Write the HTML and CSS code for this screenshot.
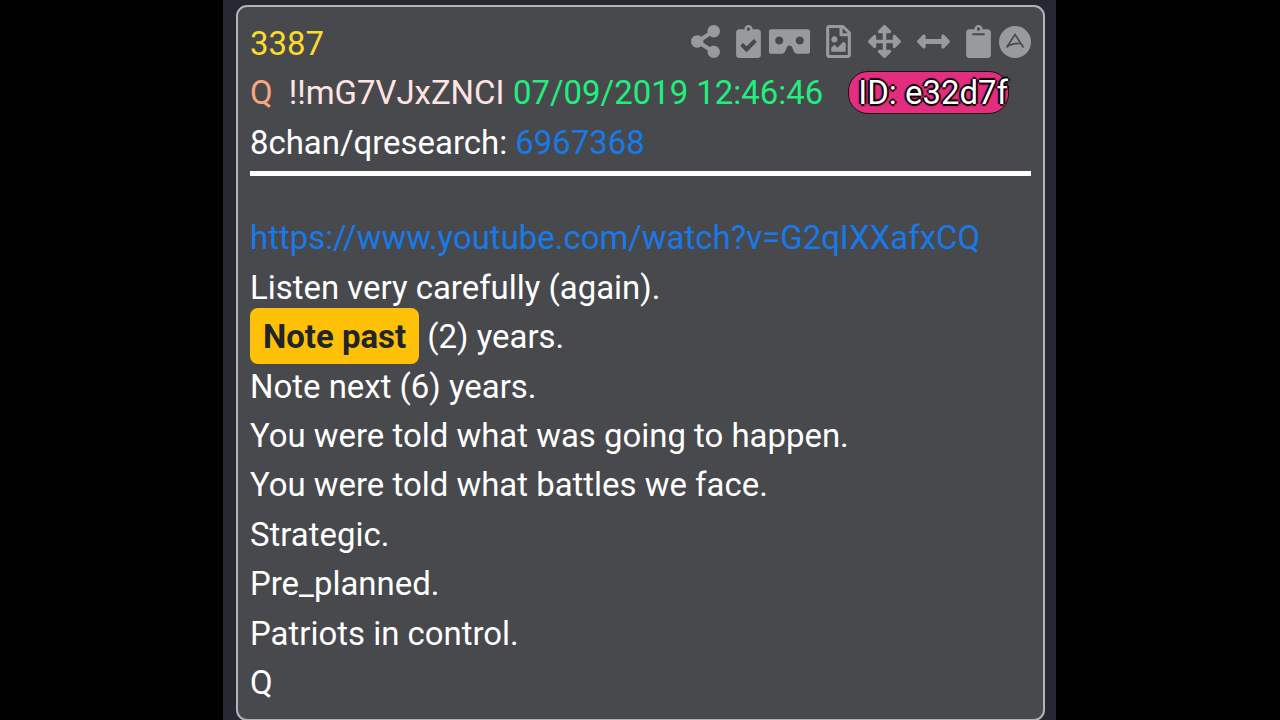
FILE: index.html
```html
<!DOCTYPE html>
<html lang="en">
<head>
    <meta charset="UTF-8">
    <meta name="viewport" content="width=device-width, initial-scale=1.0">
    <title>3387</title>
    <link rel="stylesheet" href="styles.css">
</head>
<body>
    <div class="page">
        <div class="post">
            <!-- Number and toolbar -->
            <div class="top">
                <span class="number">3387</span>
                <div class="tools">
                    <svg class="icon share" viewBox="0 0 448 512"><path d="M352 320c-22.608 0-43.387 7.819-59.79 20.895l-102.486-64.054a96.551 96.551 0 0 0 0-41.683l102.486-64.054C308.613 184.181 329.392 192 352 192c53.019 0 96-42.981 96-96S405.019 0 352 0s-96 42.981-96 96c0 7.158.79 14.13 2.276 20.841L155.79 180.895C139.387 167.819 118.608 160 96 160c-53.019 0-96 42.981-96 96s42.981 96 96 96c22.608 0 43.387-7.819 59.79-20.895l102.486 64.054A96.301 96.301 0 0 0 256 416c0 53.019 42.981 96 96 96s96-42.981 96-96-42.981-96-96-96z"/></svg>
                    <svg class="icon check" viewBox="0 0 384 512"><path d="M336 64h-80c0-35.3-28.7-64-64-64s-64 28.7-64 64H48C21.5 64 0 85.5 0 112v352c0 26.5 21.5 48 48 48h288c26.5 0 48-21.5 48-48V112c0-26.5-21.5-48-48-48zM192 40c13.3 0 24 10.7 24 24s-10.7 24-24 24-24-10.7-24-24 10.7-24 24-24zm121.2 231.8l-143 141.8c-4.7 4.7-12.3 4.6-17-.1l-82.6-83.3c-4.7-4.7-4.6-12.3.1-17L99.1 285c4.7-4.7 12.3-4.6 17 .1l46 46.4 106-105.2c4.7-4.7 12.3-4.6 17 .1l28.2 28.4c4.7 4.8 4.6 12.3-.1 17z"/></svg>
                    <svg class="icon vr" viewBox="0 0 640 512"><path d="M608 64H32C14.33 64 0 78.33 0 96v320c0 17.67 14.33 32 32 32h160.22c25.19 0 48.03-14.77 58.36-37.74l27.74-61.64C286.21 331.08 302.35 320 320 320s33.79 11.08 41.68 28.62l27.74 61.64C399.75 433.23 422.6 448 447.78 448H608c17.67 0 32-14.33 32-32V96c0-17.67-14.33-32-32-32zM160 304c-35.35 0-64-28.65-64-64s28.65-64 64-64 64 28.65 64 64-28.65 64-64 64zm320 0c-35.35 0-64-28.65-64-64s28.65-64 64-64 64 28.65 64 64-28.65 64-64 64z"/></svg>
                    <svg class="icon image" viewBox="0 0 384 512"><path d="M369.9 97.9L286 14C277 5 264.8-.1 252.1-.1H48C21.5 0 0 21.5 0 48v416c0 26.5 21.5 48 48 48h288c26.5 0 48-21.5 48-48V131.9c0-12.7-5.1-25-14.1-34zM332.1 128H256V51.9l76.1 76.1zM48 464V48h160v104c0 13.3 10.7 24 24 24h104v288H48zm32-48h224V288l-23.5-23.5c-4.7-4.7-12.3-4.7-17 0L176 352l-39.5-39.5c-4.7-4.7-12.3-4.7-17 0L80 352v64zm48-240c-26.5 0-48 21.5-48 48s21.5 48 48 48 48-21.5 48-48-21.5-48-48-48z"/></svg>
                    <svg class="icon move" viewBox="0 0 512 512"><path d="M352.201 425.775l-79.196 79.196c-9.373 9.373-24.568 9.373-33.941 0l-79.196-79.196c-15.119-15.119-4.411-40.971 16.971-40.97h51.162L228 284H127.196v51.162c0 21.382-25.851 32.09-40.971 16.971L7.029 272.937c-9.373-9.373-9.373-24.569 0-33.941L86.225 159.8c15.119-15.119 40.971-4.411 40.971 16.971V228H228V127.196h-51.23c-21.382 0-32.09-25.851-16.971-40.971l79.196-79.196c9.373-9.373 24.568-9.373 33.941 0l79.196 79.196c15.119 15.119 4.411 40.971-16.971 40.971h-51.162V228h100.804v-51.162c0-21.382 25.851-32.09 40.97-16.971l79.196 79.196c9.373 9.373 9.373 24.569 0 33.941L425.773 352.2c-15.119 15.119-40.971 4.411-40.97-16.971V284H284v100.804h51.23c21.382 0 32.09 25.851 16.971 40.971z"/></svg>
                    <svg class="icon wide" viewBox="0 0 512 512"><path d="M377.941 169.941V216H134.059v-46.059c0-21.382-25.851-32.09-40.971-16.971L7.029 239.029c-9.373 9.373-9.373 24.568 0 33.941l86.059 86.059c15.119 15.119 40.971 4.411 40.971-16.971V296h243.882v46.059c0 21.382 25.851 32.09 40.971 16.971l86.059-86.059c9.373-9.373 9.373-24.568 0-33.941l-86.059-86.059c-15.119-15.12-40.971-4.412-40.971 16.97z"/></svg>
                    <svg class="icon clip" viewBox="0 0 384 512"><path d="M384 112v352c0 26.51-21.49 48-48 48H48c-26.51 0-48-21.49-48-48V112c0-26.51 21.49-48 48-48h80c0-35.29 28.71-64 64-64s64 28.71 64 64h80c26.51 0 48 21.49 48 48zM192 40c-13.255 0-24 10.745-24 24s10.745 24 24 24 24-10.745 24-24-10.745-24-24-24m96 114v-20a6 6 0 0 0-6-6H102a6 6 0 0 0-6 6v20a6 6 0 0 0 6 6h180a6 6 0 0 0 6-6z"/></svg>
                    <svg class="icon archive" viewBox="0 0 32 32">
                        <circle cx="16" cy="16" r="16"/>
                        <path class="line" d="M7.5 21.5L16 8.5L24.5 21.5M8.5 20.5Q13 17.3 21.5 17.3"/>
                    </svg>
                </div>
            </div>

            <!-- Author, date, id -->
            <div class="row">
                <span class="name">Q</span>
                <span class="trip">!!mG7VJxZNCI</span>
                <span class="date">07/09/2019 12:46:46</span>
                <span class="uid">ID: e32d7f</span>
            </div>
            <div class="row board">8chan/qresearch: <a class="link">6967368</a></div>

            <!-- Message -->
            <div class="message">
                <div><a class="link url">https://www.youtube.com/watch?v=G2qIXXafxCQ</a></div>
                <div>Listen very carefully (again).</div>
                <div><span class="badge">Note past</span> (2) years.</div>
                <div>Note next (6) years.</div>
                <div>You were told what was going to happen.</div>
                <div>You were told what battles we face.</div>
                <div>Strategic.</div>
                <div>Pre_planned.</div>
                <div>Patriots in control.</div>
                <div>Q</div>
            </div>
        </div>
    </div>
</body>
</html>
```
FILE: styles.css
```css
body {
    margin: 0;
    background: black;
    height: 720px;
    overflow: hidden;
    font-family: Roboto, sans-serif;
    font-size: 32.94px;
    line-height: 49.45px;
    color: white;
}
.page {
    box-sizing: border-box;
    width: 833px;
    height: 720px;
    margin-left: 223px;
    padding: 4.5px 11px 0 13px;
    background: #262833;
}
.post {
    box-sizing: border-box;
    height: 716px;
    padding: 11px 12px 0;
    border: 2px solid #b2b3b9;
    border-radius: 11px;
    background: #48494d;
    white-space: nowrap;
}
.top {
    display: flex;
    justify-content: space-between;
    align-items: center;
    height: 50.5px;
}
.number {
    padding-top: 1px;
    color: #fbdc2c;
}
.tools {
    display: flex;
    align-items: center;
    margin-top: -2px;
}
.icon {
    height: 33px;
    fill: #999a9c;
}
.share { width: 29px; margin-right: 16px; }
.check { width: 25px; margin-right: 8px; }
.vr { width: 41px; margin-right: 16px; }
.image { width: 25px; margin-right: 16.5px; }
.move { width: 33px; margin-right: 16px; }
.wide { width: 33px; margin-right: 16px; }
.clip { width: 25px; margin-right: 8px; }
.archive {
    width: 32px;
    height: 32px;
    margin-right: 0.5px;
}
.line {
    fill: none;
    stroke: #48494d;
    stroke-width: 1.6;
}
.row {
    display: flex;
    align-items: center;
    height: 49.5px;
}
.name { color: #f9a681; margin-right: 16px; }
.trip { color: #ffe4e1; margin-right: 8.5px; }
.date { color: #21ef7d; margin-right: 25px; }
.uid {
    box-sizing: border-box;
    width: 161px;
    height: 43px;
    padding-left: 9px;
    border: 1px solid #1c1016;
    border-radius: 20px;
    background: #e32d7f;
    line-height: 41px;
    text-shadow: 2px 0 1px black, -2px 0 1px black, 0 2px 1px black, 0 -2px 1px black;
}
.link { color: #1879e8; }
.board {
    align-items: flex-start;
    white-space: pre;
    height: 53px;
    border-bottom: 5px solid white;
}
.message { padding-top: 37.7px; }
.message div { height: 49.45px; }
.badge {
    display: inline-block;
    height: 56px;
    margin-top: -4px;
    padding: 0 13px;
    border-radius: 8px;
    background: #ffc107;
    color: #212529;
    font-weight: bold;
    line-height: 57px;
}
```
